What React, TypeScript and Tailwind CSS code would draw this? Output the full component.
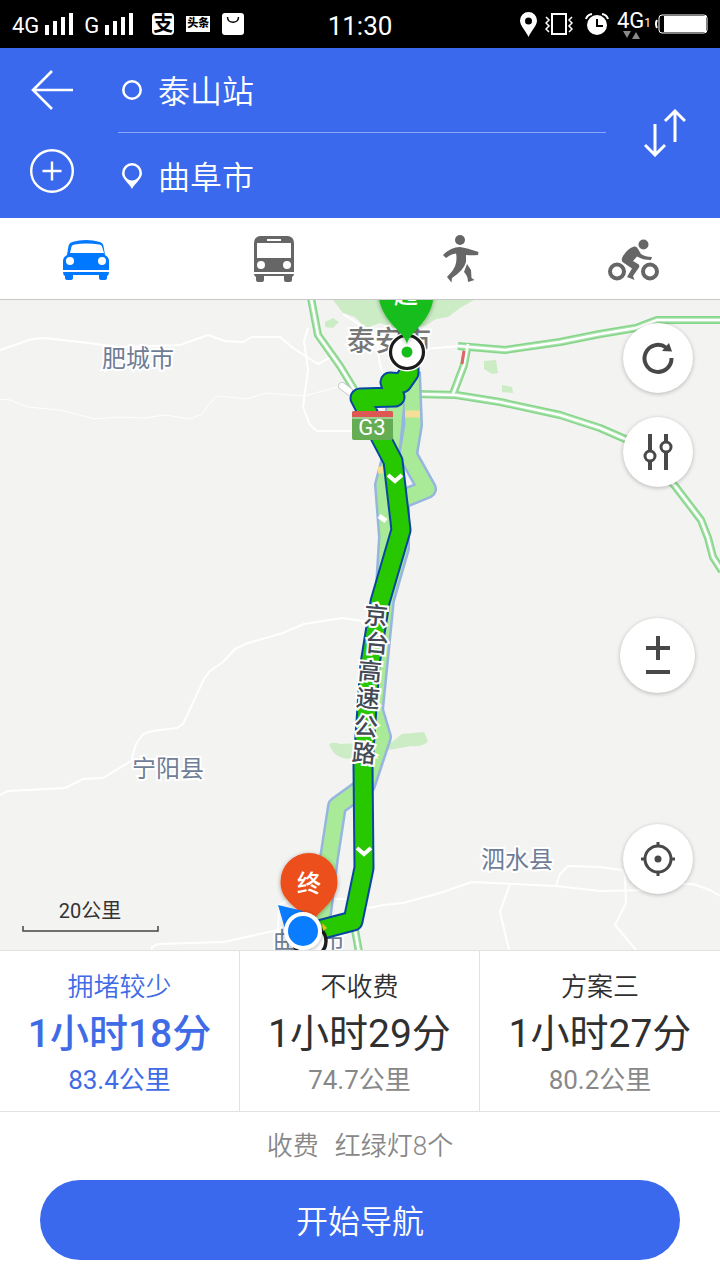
import { useState } from "react"
import type { ReactNode } from "react"

const plans = [
  { id: 1, name: "拥堵较少", time: "1小时18分", distance: "83.4公里" },
  { id: 2, name: "不收费", time: "1小时29分", distance: "74.7公里" },
  { id: 3, name: "方案三", time: "1小时27分", distance: "80.2公里" },
]

const localRoads = [
  "M0 350 L32 339 L44 338 L80 342 L120 347 L180 345 L208 335 L225 341 L243 342 L252 337 L280 337 L293 348 L318 364 L335 355",
  "M308 328 L304 341 L308 370 L303 407 L310 425 L317 431 L355 431",
  "M0 795 L8 791 L65 788 L83 779 L103 778 L131 761 L136 744 L143 734 L152 731 L177 728 L183 724 L204 679 L210 671 L223 662 L235 649 L248 643 L283 633 L304 624 L342 618 L370 622",
  "M152 950 L152 947 L158 944 L224 942 L278 930 L279 905 L290 899 L345 899 L370 908 L383 905 L403 903 L440 893 L472 882 L556 886 L600 891 L650 890 L683 884 L693 884 L710 890 L720 896",
  "M556 886 L560 874 L568 866 L600 867 L622 870 L625 877 L626 903 L615 925 L636 950",
  "M510 884 L500 912 L509 950",
  "M343 314 L376 335 L380 365 L386 382",
  "M425 349 L460 346",
]

const expressways = [
  "M311 298 L318 335 L340 366 L357 394",
  "M458 346 L505 350 L560 342 L600 334 L636 328 L657 320 L722 320",
  "M468 344 L464 365 L453 394",
  "M416 394 L456 395 L500 402 L560 415 L600 428 L632 442 L675 486 L701 520 L708 538 L713 557 L722 571",
  "M355 930 L359 952",
]

const mainRoute =
  "M409 360 L409 373 L402 383 L390 382 L395 397 L360 398 L393 461 L401 530 L380 602 L370 664 L363 765 L364 868 L353 921 L315 931"

const otherRoutes = [
  "M411 372 L413 425 L408 455 L427 489 L400 500 L400 548 L385 600 L374 710 L382 737 L366 785 L337 806 L329 858 L321 922",
  "M396 400 L390 462 L384 485 L388 537 L384 602",
]

const roadName = [
  { char: "京", x: 376, y: 615 },
  { char: "台", x: 377, y: 643 },
  { char: "高", x: 370, y: 671 },
  { char: "速", x: 368, y: 698 },
  { char: "公", x: 366, y: 726 },
  { char: "路", x: 364, y: 753 },
]

function Signal() {
  return (
    <svg width="29" height="22" viewBox="0 0 29 22" fill="#fff" aria-hidden="true">
      <path d="M0 12h4v10H0zM8 8h4v14H8zM16 4h4v18h-4zM24 0h4v22h-4z" />
    </svg>
  )
}

function StatusBar() {
  return (
    <div className="grid h-12 grid-cols-[1fr_auto_1fr] items-center bg-black px-3 text-white">
      <div className="flex items-center gap-[10px]">
        <div className="flex items-center gap-[6px] text-[22px] leading-none">
          <span className="pt-1">4G</span> <Signal />
        </div>
        <div className="flex items-center gap-[6px] text-[22px] leading-none">
          <span className="pt-1">G</span> <Signal />
        </div>
        <div className="ml-2 flex items-center gap-3">
          <span className="flex size-[22px] items-center justify-center rounded bg-white text-[20px] leading-5 font-bold text-black">
            支
          </span>
          <span className="flex h-4 w-6 items-center justify-center bg-white text-[11px] leading-4 font-black text-black">
            头条
          </span>
          <svg width="22" height="22" viewBox="0 0 22 22" aria-hidden="true">
            <rect width="22" height="22" rx="3" fill="#fff" />
            <path d="M5.500 4c0 7 11 7 11 0" fill="none" stroke="#000" strokeWidth="1.500" />
          </svg>
        </div>
      </div>
      <div className="pt-1 text-[26px]">11:30</div>
      <div className="flex items-center justify-end">
        <svg className="mr-2" width="17" height="25" viewBox="0 0 17 25" aria-hidden="true">
          <path
            d="M8.500 0A8.500 8.500 0 0 0 0 8.500C0 14 6 19 8.500 25C11 19 17 14 17 8.500A8.500 8.500 0 0 0 8.500 0ZM8.500 5.500a3.500 3.500 0 1 1 0 7a3.500 3.500 0 0 1 0-7Z"
            fill="#fff"
            fillRule="evenodd"
          />
        </svg>
        <svg className="mr-3" width="28" height="22" viewBox="0 0 28 22" fill="none" stroke="#fff" aria-hidden="true">
          <rect x="7" y="1" width="14" height="20" strokeWidth="2" />
          <path d="M1 4l3 3l-3 3l3 3l-3 3l3 3M27 4l-3 3l3 3l-3 3l3 3l-3 3" strokeWidth="1.500" />
        </svg>
        <svg className="mr-2" width="24" height="22" viewBox="0 0 24 22" aria-hidden="true">
          <circle cx="12" cy="12" r="10" fill="#fff" />
          <path d="M12 6v7h6" fill="none" stroke="#000" strokeWidth="2" />
          <path d="M1 6Q2 2 7 1M23 6Q22 2 17 1" fill="none" stroke="#fff" strokeWidth="2" />
        </svg>
        <div className="flex flex-col pt-[2px]">
          <div className="flex items-end text-[22px] leading-5">
            4G<span className="text-xs leading-4">1</span>
          </div>
          <svg className="ml-[6px]" width="18" height="8" viewBox="0 0 18 8" fill="#8a8a8a" aria-hidden="true">
            <path d="M0 0h8l-4 7zM9 8h8l-4-7z" />
          </svg>
        </div>
        <svg className="ml-1" width="53" height="20" viewBox="0 0 53 20" aria-hidden="true">
          <path d="M2 6Q0 10 2 14" fill="none" stroke="#fff" strokeWidth="2" />
          <rect x="4" y="1" width="48" height="18" rx="3" fill="none" stroke="#fff" />
          <rect x="9" y="2" width="42" height="16" fill="#fff" />
        </svg>
      </div>
    </div>
  )
}

function SearchHeader() {
  const [from, setFrom] = useState("泰山站")
  const [to, setTo] = useState("曲阜市")

  const swap = () => {
    setFrom(to)
    setTo(from)
  }

  return (
    <header className="flex bg-[#3a69ed] text-white">
      <div className="flex w-[104px] flex-col items-center">
        <button aria-label="返回" className="flex h-[84px] items-center">
          <svg width="42" height="40" viewBox="0 0 42 40" fill="none" stroke="#fff" strokeWidth="2.600">
            <path d="M21 1L2 20L21 39M2 20H42" />
          </svg>
        </button>
        <button aria-label="添加途经点" className="flex h-[78px] items-center">
          <svg width="44" height="44" viewBox="0 0 44 44" fill="none" stroke="#fff" strokeWidth="2.400">
            <circle cx="22" cy="22" r="20.800" />
            <path d="M22 12.500v19M12.500 22h19" />
          </svg>
        </button>
      </div>
      <div className="ml-[14px] flex min-w-0 flex-1 flex-col">
        <label className="flex h-[85px] items-center gap-4 border-b border-[#8aa6f4] pl-1">
          <svg className="shrink-0" width="20" height="20" viewBox="0 0 20 20" role="img" aria-label="起点">
            <circle cx="10" cy="10" r="8.700" fill="none" stroke="#fff" strokeWidth="2.500" />
          </svg>
          <input
            className="w-full min-w-0 bg-transparent pt-1 text-[32px] leading-10 font-[350] outline-none"
            value={from}
            onChange={(e) => setFrom(e.target.value)}
          />
        </label>
        <label className="flex h-[85px] items-center gap-4 pl-1">
          <svg className="shrink-0" width="20" height="26" viewBox="0 0 20 26" role="img" aria-label="终点">
            <path
              d="M10 0A10 10 0 0 0 0 10C0 16 7 20 10 26C13 20 20 16 20 10A10 10 0 0 0 10 0ZM10 2.500a7.500 7.500 0 1 1 0 15a7.500 7.500 0 0 1 0-15Z"
              fill="#fff"
              fillRule="evenodd"
            />
          </svg>
          <input
            className="w-full min-w-0 bg-transparent pt-1 text-[32px] leading-10 font-[350] outline-none"
            value={to}
            onChange={(e) => setTo(e.target.value)}
          />
        </label>
      </div>
      <button aria-label="交换起点和终点" onClick={swap} className="flex w-[114px] items-center justify-center pl-1">
        <svg width="42" height="48" viewBox="0 0 42 48" fill="none" stroke="#fff" strokeWidth="3">
          <path d="M11 15v31M1 36l10 10l10-10M31 33V2M21 12L31 2l10 10" />
        </svg>
      </button>
    </header>
  )
}

function ModeTabs() {
  return (
    <nav className="grid h-[82px] grid-cols-[172fr_204fr_170fr_174fr] items-center border-b border-[#c8c8c8] bg-white">
      <button aria-label="驾车" className="flex h-full items-center justify-center pt-[2px] text-[#0078ff]">
        <svg width="46" height="40" viewBox="0 0 46 40" fill="currentColor" fillRule="evenodd">
          <path d="M0 21Q0 17 4 15L5.500 6Q6 3 9 2Q23 -2 37 2Q40 3 40.500 6L42 15Q46 17 46 21V30H0ZM7 13H41L39 6.500Q38.500 5 36.500 4.500Q23 2.500 11.500 4.500Q9 5 8.500 6.500ZM7 17a4 4 0 1 0 0 8a4 4 0 0 0 0-8ZM39 17a4 4 0 1 0 0 8a4 4 0 0 0 0-8Z" />
          <path d="M0 32H46Q46 35 44 36V38Q44 40 42 40H38Q36 40 36 38V35H10V38Q10 40 8 40H4Q2 40 2 38V36Q0 35 0 32Z" />
        </svg>
      </button>
      <button aria-label="公交" className="flex h-full items-center justify-center text-[#666]">
        <svg width="40" height="46" viewBox="0 0 40 46" fill="currentColor" fillRule="evenodd">
          <path d="M6 0H34Q40 1 40 7V36H0V7Q0 1 6 0ZM13 3V5H27V3ZM3 7V22H37V7ZM7 25a4 4 0 1 0 0 8a4 4 0 0 0 0-8ZM33 25a4 4 0 1 0 0 8a4 4 0 0 0 0-8Z" />
          <path d="M0 38H40Q40 40 38 41V44Q38 46 36 46H32Q30 46 30 44V40H10V44Q10 46 8 46H4Q2 46 2 44V41Q0 40 0 38Z" />
        </svg>
      </button>
      <button aria-label="步行" className="flex h-full items-center justify-center text-[#666]">
        <svg width="36" height="48" viewBox="0 0 36 48" fill="currentColor">
          <circle cx="17" cy="5" r="5" />
          <path d="M0 20Q8 12 17 12Q24 13 35.500 17L35 20Q28 20.500 23 20L23 27Q21 35 9 43L8.500 47.500L4 42Q12 34 13 28Q14 22 13 18.500Q8 19 3 23Z" />
          <path d="M24 29L28 35L28.500 43L31.500 45L25 47Q25 41 21 37Z" />
        </svg>
      </button>
      <button aria-label="骑行" className="flex h-full items-center justify-center pt-[2px] text-[#666]">
        <svg width="51" height="42" viewBox="0 0 51 42" fill="currentColor">
          <circle cx="9" cy="32.500" r="7" fill="none" stroke="currentColor" strokeWidth="4" />
          <circle cx="42" cy="32.500" r="7" fill="none" stroke="currentColor" strokeWidth="4" />
          <circle cx="35.500" cy="5.500" r="5" />
          <path d="M26 7.500Q29 7 30 10L33 15Q37 18 44 18L43 21Q35 21 29 17.500L25 22L30 25Q32 26 31 28.500L25 37L26.500 41L19 38L24 29.500L16 24Q12 22 15 17Q20 9 26 7.500Z" />
        </svg>
      </button>
    </nav>
  )
}

function RouteMap() {
  return (
    <svg
      className="absolute inset-0 size-full"
      viewBox="0 300 720 650"
      preserveAspectRatio="xMidYMid slice"
      role="img"
      aria-label="路线地图"
    >
      <defs>
        <filter id="pin-shadow" x="-20%" y="-20%" width="140%" height="140%">
          <feDropShadow dx="0" dy="1" stdDeviation="2" floodOpacity="0.350" />
        </filter>
      </defs>
      <rect y="300" width="720" height="650" fill="#f3f3f2" />

      {/* green areas */}
      <g fill="#cbecc4">
        <path d="M333 300L343 313L355 317L366 328L380 323L400 330L425 326L436 319L448 317L460 308L474 300Z" />
        <path d="M484 361l12-1l2 13l-6 1l-8-5zM502 385l10 2l1 6l-11-1zM325 322l8-4l6 4l-6 6l-8-1z" />
        <path d="M329 745Q332 741 340 744L392 742L402 734L424 732L428 741Q424 747 412 746L388 750L352 759Q340 759 334 753Z" />
      </g>

      {/* roads */}
      <g fill="none" stroke="#fff" strokeLinejoin="round">
        <path
          d="M0 399 L10 400 L28 407 L60 410 L95 419 L118 417 L145 418 L165 415 L190 419 L202 414 L216 396 L247 399 L266 393 L304 396 L345 385"
          strokeWidth="1"
        />
        {localRoads.map((d) => (
          <path key={d} d={d} strokeWidth="2" />
        ))}
      </g>
      <g fill="none" strokeLinejoin="round">
        {expressways.map((d) => (
          <path key={d} d={d} stroke="#86d68a" strokeWidth="8" />
        ))}
        {expressways.map((d) => (
          <path key={d} d={d} stroke="#a9e2ab" strokeWidth="5" />
        ))}
        {expressways.map((d) => (
          <path key={d} d={d} stroke="#fff" strokeWidth="2.500" />
        ))}
        <path d="M464 351L462 364" stroke="#e26464" strokeWidth="3" />
        <path d="M342 386L350 392" stroke="#ccc" strokeWidth="8" strokeLinecap="round" />
        <path d="M342 386L350 392" stroke="#fff" strokeWidth="6" strokeLinecap="round" />
      </g>

      <g fontSize="24" fill="#6f7d96" stroke="#fff" strokeWidth="4" paintOrder="stroke" textAnchor="middle">
        <text x="138" y="367">肥城市</text>
        <text x="168" y="777">宁阳县</text>
        <text x="517" y="868">泗水县</text>
        <text x="309" y="949">曲阜市</text>
        <text x="389" y="351" fontSize="28" fontWeight="500" fill="#777">泰安市</text>
      </g>

      {/* alternative routes */}
      <g fill="none" strokeLinejoin="round">
        {otherRoutes.map((d) => (
          <path key={d} d={d} stroke="#96b5df" strokeWidth="20" />
        ))}
        {otherRoutes.map((d) => (
          <path key={d} d={d} stroke="#a9ea98" strokeWidth="15" />
        ))}
        <path d="M405 414H420M378 470H384" stroke="#f3df96" strokeWidth="7" />
        <path d="M379 516l7 5" stroke="#fff" strokeWidth="5" />
      </g>

      {/* selected route */}
      <g fill="none" strokeLinejoin="round">
        <path d={mainRoute} stroke="#08479f" strokeWidth="21" />
        <path d={mainRoute} stroke="#28c800" strokeWidth="17" />
        <path d="M388 475l7 6l7-6M357 848l7 6l7-6" stroke="#fff" strokeWidth="4" strokeLinejoin="miter" />
      </g>

      <g>
        <rect x="352" y="411" width="41" height="29" rx="2" fill="#64ad53" />
        <path d="M352 417v-4q0-2 2-2h37q2 0 2 2v4z" fill="#dd5853" />
        <path d="M352 418h41" stroke="#d9ead5" />
        <text x="372" y="435" fontSize="22" fill="#fff" textAnchor="middle">G3</text>
      </g>

      <g fontSize="24" fontWeight="500" fill="#444a55" stroke="#fff" strokeWidth="4" paintOrder="stroke" textAnchor="middle">
        {roadName.map((item) => (
          <text key={item.char} x={item.x} y={item.y + 9} transform={`rotate(5 ${item.x} ${item.y})`}>
            {item.char}
          </text>
        ))}
      </g>

      {/* start marker */}
      <circle cx="407" cy="352" r="19.500" fill="#fff" />
      <circle cx="407" cy="352" r="16.500" fill="#fff" stroke="#1c1c1c" strokeWidth="3.200" />
      <path
        d="M407 344C404 330 379 322 378 290A28 28 0 0 1 434 290C434 322 410 330 407 344Z"
        fill="#15bd1b"
        filter="url(#pin-shadow)"
      />
      <circle cx="407" cy="352" r="5.500" fill="#15bd1b" />
      <text x="406" y="303" fontSize="24" fontWeight="500" fill="#fff" textAnchor="middle">起</text>

      {/* end marker */}
      <circle cx="310" cy="941" r="16" fill="#fff" stroke="#1c1c1c" strokeWidth="3.500" />
      <path d="M322 923l5 5l-4 3z" fill="#f5c518" />
      <path
        d="M309 853A28.500 28.500 0 0 0 280.500 882C280.500 904 303 908 311 926C314 912 337.500 904 337.500 882A28.500 28.500 0 0 0 309 853Z"
        fill="#ec4f1c"
        filter="url(#pin-shadow)"
      />
      <text x="309" y="892" fontSize="24" fontWeight="500" fill="#fff" textAnchor="middle">终</text>

      {/* current position */}
      <path d="M278 905L303 911L285 929Z" fill="#0a7cff" />
      <circle cx="303" cy="931" r="19" fill="#fff" filter="url(#pin-shadow)" />
      <circle cx="303" cy="931" r="15" fill="#0a7cff" />

      <text x="90" y="918" fontSize="20" fill="#333" textAnchor="middle">20公里</text>
      <path d="M23 926v5h135v-5" fill="none" stroke="#444" strokeWidth="1.500" />
    </svg>
  )
}

function RoundButton({ label, children }: { label: string; children: ReactNode }) {
  return (
    <button
      aria-label={label}
      className="flex size-[70px] items-center justify-center rounded-full bg-white text-[#484848] shadow-[0_1px_4px_rgba(0,0,0,0.25)]"
    >
      {children}
    </button>
  )
}

function MapControls() {
  return (
    <div className="absolute inset-y-0 right-0 flex flex-col items-center justify-between pt-[23px] pr-[25px] pb-14">
      <div className="flex flex-col gap-6">
        <RoundButton label="刷新路线">
          <svg width="32" height="32" viewBox="0 0 32 32" fill="none">
            <path d="M29.500 16A13.500 13.500 0 1 1 24 5.500" stroke="currentColor" strokeWidth="4" />
            <path d="M27 1L30 9.500L20 9Z" fill="currentColor" />
          </svg>
        </RoundButton>
        <RoundButton label="路线偏好">
          <svg width="32" height="36" viewBox="0 0 32 36" fill="none" stroke="currentColor" strokeWidth="4">
            <path d="M8 0v17M8 27v9M24 0v8M24 18v18" />
            <circle cx="8" cy="22" r="5" strokeWidth="3" />
            <circle cx="24" cy="13" r="5" strokeWidth="3" />
          </svg>
        </RoundButton>
      </div>
      <div className="flex size-[75px] flex-col items-center rounded-full bg-white pt-4 text-[#484848] shadow-[0_1px_4px_rgba(0,0,0,0.25)]">
        <button aria-label="放大" className="flex h-7 items-center">
          <svg width="26" height="26" viewBox="0 0 26 26" stroke="currentColor" strokeWidth="4">
            <path d="M13 1v24M1 13h24" />
          </svg>
        </button>
        <button aria-label="缩小" className="flex h-5 items-center">
          <svg width="26" height="4" viewBox="0 0 26 4" stroke="currentColor" strokeWidth="4">
            <path d="M1 2h24" />
          </svg>
        </button>
      </div>
      <RoundButton label="定位">
        <svg width="34" height="34" viewBox="0 0 34 34" fill="none" stroke="currentColor" strokeWidth="3">
          <circle cx="17" cy="17" r="13" />
          <path d="M17 0v5M17 29v5M0 17h5M29 17h5" />
          <circle cx="17" cy="17" r="3.500" fill="currentColor" stroke="none" />
        </svg>
      </RoundButton>
    </div>
  )
}

export default function App() {
  const [selected, setSelected] = useState(1)

  return (
    <div className="flex min-h-screen flex-col bg-white font-[Roboto,'Noto_Sans_CJK_SC',sans-serif]">
      <StatusBar />
      <SearchHeader />
      <ModeTabs />

      <main className="relative min-h-[480px] flex-1 overflow-hidden bg-[#f3f3f2]">
        <RouteMap />
        <MapControls />
      </main>

      <section className="grid grid-cols-3 divide-x divide-[#e2e2e2] border-y border-[#e2e2e2]">
        {plans.map((plan) => {
          const active = plan.id === selected
          return (
            <button
              key={plan.id}
              onClick={() => setSelected(plan.id)}
              className={`flex flex-col items-center pt-[13px] pb-[9px] ${active ? "text-[#3f6be6]" : "text-[#303030]"}`}
            >
              <span className="text-[26px] leading-[46px] font-[350]">{plan.name}</span>
              <span className={`text-[39px] leading-[48px] ${active ? "font-medium" : "font-normal"}`}>{plan.time}</span>
              <span className={`text-[26px] leading-[44px] font-normal ${active ? "" : "text-[#888]"}`}>
                {plan.distance}
              </span>
            </button>
          )
        })}
      </section>

      <footer className="px-10 pb-5">
        <p className="flex h-[68px] items-center justify-center gap-4 text-[26px] font-[350] text-[#888]">
          <span>收费</span>
          <span>红绿灯8个</span>
        </p>
        <button className="h-20 w-full rounded-full bg-[#3a69ed] pt-1 text-[32px] font-[350] text-white">
          开始导航
        </button>
      </footer>
    </div>
  )
}
